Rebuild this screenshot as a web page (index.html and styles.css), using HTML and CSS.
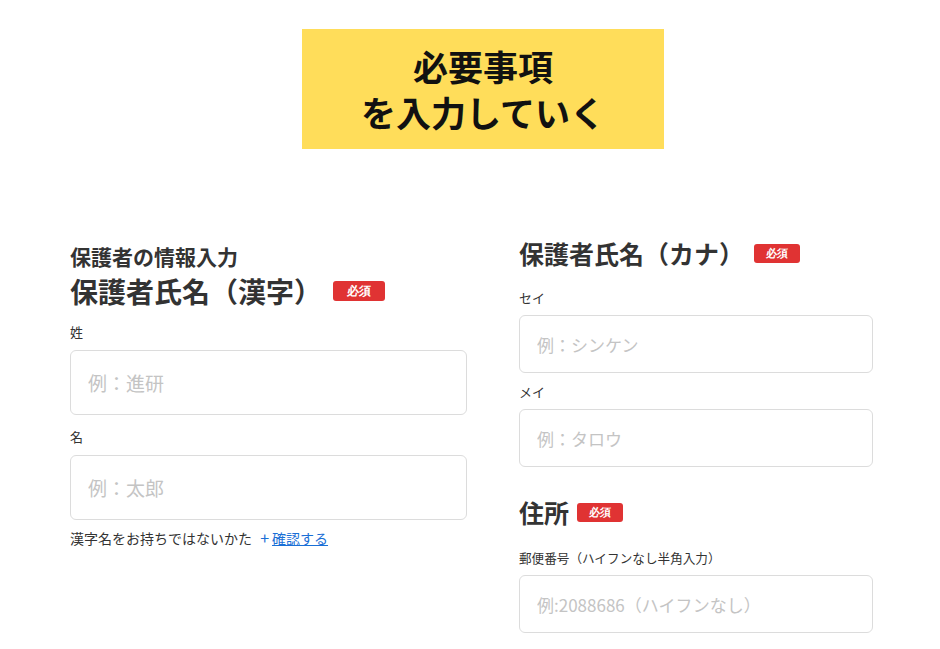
FILE: index.html
```html
<!DOCTYPE html>
<html lang="ja">
<head>
    <meta charset="UTF-8">
    <meta name="viewport" content="width=device-width, initial-scale=1.0">
    <title>必要事項を入力していく</title>
    <link rel="stylesheet" href="styles.css">
</head>
<body>
    <div class="hero">
        <p>必要事項<br>を入力していく</p>
    </div>

    <div class="form">
        <div class="column left">
            <p class="group-title">保護者の情報入力</p>
            <h2 class="field-title kanji">保護者氏名（漢字）<span class="badge">必須</span></h2>
            <label class="field-label first" for="sei">姓</label>
            <input class="field-input tall" id="sei" type="text" placeholder="例：進研">
            <label class="field-label" for="mei">名</label>
            <input class="field-input tall" id="mei" type="text" placeholder="例：太郎">
            <p class="note">漢字名をお持ちではないかた <span class="plus">+</span><a href="#">確認する</a></p>
        </div>

        <div class="column right">
            <h2 class="field-title kana">保護者氏名（カナ）<span class="badge">必須</span></h2>
            <label class="field-label first" for="sei-kana">セイ</label>
            <input class="field-input" id="sei-kana" type="text" placeholder="例：シンケン">
            <label class="field-label" for="mei-kana">メイ</label>
            <input class="field-input" id="mei-kana" type="text" placeholder="例：タロウ">

            <h2 class="field-title address">住所<span class="badge">必須</span></h2>
            <label class="field-label small" for="zip">郵便番号（ハイフンなし半角入力）</label>
            <input class="field-input" id="zip" type="text" placeholder="例:2088686（ハイフンなし）">
        </div>
    </div>
</body>
</html>
```

FILE: styles.css
```css
body {
    font-family: 'Noto Sans CJK JP', 'Noto Sans', sans-serif;
    margin: 0;
    padding: 0;
    background-color: #fff;
    color: #333;
}

.hero {
    width: 362px;
    height: 120px;
    margin: 29px 0 0 302px;
    background-color: #ffdd5a;
    display: flex;
    align-items: center;
    justify-content: center;
}

.hero p {
    margin: 0;
    text-align: center;
    font-size: 35px;
    font-weight: bold;
    line-height: 46px;
    color: #111;
}

.form {
    display: flex;
    gap: 52px;
    padding-left: 70px;
    margin-top: 89px;
}

.column {
    display: flex;
    flex-direction: column;
}

.left {
    width: 397px;
    padding-top: 5px;
}

.right {
    width: 354px;
}

.group-title {
    margin: 0;
    font-size: 21px;
    font-weight: bold;
    line-height: 26px;
}

.field-title {
    margin: 0;
    font-weight: bold;
    display: flex;
    align-items: center;
}

.field-title.kanji {
    font-size: 28px;
    line-height: 44px;
}

.field-title.kana {
    font-size: 25px;
    line-height: 30px;
}

.field-title.address {
    font-size: 25px;
    line-height: 30px;
    margin-top: 30px;
}

.badge {
    display: inline-block;
    background-color: #e03333;
    color: #fff;
    font-family: 'DejaVu Serif', serif;
    font-size: 11px;
    font-weight: bold;
    line-height: 19px;
    padding: 0 12px;
    border-radius: 3px;
}

.kanji .badge {
    font-size: 12px;
    line-height: 20px;
    padding: 0 14px;
    margin-left: 11px;
}

.kana .badge {
    margin-left: 10px;
}

.address .badge {
    margin-left: 8px;
}

.field-label {
    font-size: 13px;
    line-height: 18px;
    margin: 13px 0 9px;
}

.field-label.first {
    margin-top: 10px;
}

.right .field-label {
    margin: 10px 0 8px;
}

.right .field-label.first {
    margin-top: 21px;
}

.right .field-label.small {
    font-size: 12.6px;
    margin-top: 22px;
}

.field-input {
    box-sizing: border-box;
    width: 100%;
    height: 58px;
    border: 1px solid #dcdcdc;
    border-radius: 6px;
    padding: 0 17px;
    font-family: inherit;
    font-size: 17px;
    color: #333;
}

.field-input.tall {
    height: 65px;
    font-size: 19px;
}

.field-input::placeholder {
    color: #c4c4c4;
}

.note {
    margin: 8px 0 0;
    font-size: 14px;
    line-height: 18px;
}

.plus {
    color: #1a6fd6;
    font-size: 16px;
    margin: 0 3px 0 5px;
}

.note a {
    color: #1a6fd6;
}
```
